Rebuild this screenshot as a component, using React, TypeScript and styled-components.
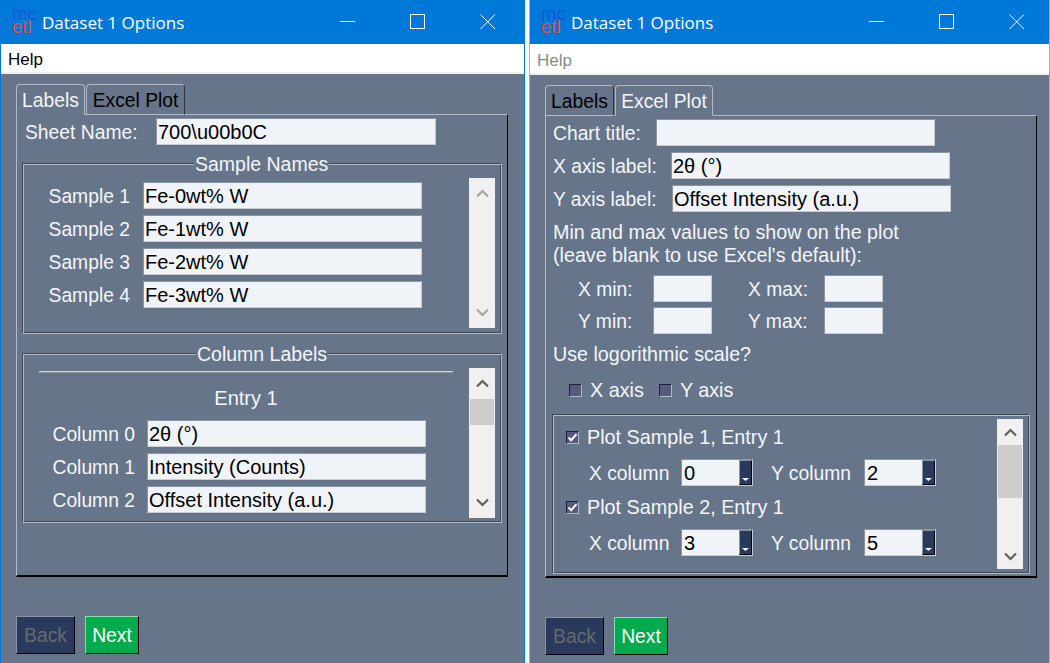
import React from 'react'
import styled, { createGlobalStyle } from 'styled-components'

const Global = createGlobalStyle`
  html, body { margin: 0; padding: 0; background: #ffffff; overflow: hidden; }
  * { box-sizing: border-box; }
`

const Desktop = styled.div`
  width: 1050px;
  height: 663px;
  display: flex;
  justify-content: space-between;
  font-family: "Liberation Sans", Arial, sans-serif;
  font-size: 19.3px;
  color: #f4f6fa;
`

const Win = styled.div<{ $w: number; $edge: string }>`
  width: ${(p) => p.$w}px;
  height: 663px;
  display: flex;
  flex-direction: column;
  background: #667589;
  border-left: 1px solid ${(p) => p.$edge};
  border-right: 1px solid ${(p) => p.$edge};
`

const TitleBar = styled.div<{ $inset: number }>`
  height: 44px;
  flex: none;
  display: flex;
  align-items: center;
  padding-right: ${(p) => p.$inset}px;
  background: #0078d7;
  color: #fff;
`

const Logo = styled.div`
  width: 41px;
  flex: none;
  padding-left: 11px;
  margin-top: -5px;
  font-size: 18.5px;
  line-height: 13px;
`

const LogoTop = styled.div`
  color: #1558d6;
`

const LogoBottom = styled.div`
  color: #dc4a50;
`

const Title = styled.div`
  flex: 1;
  font-family: "Open Sans", sans-serif;
  font-size: 17px;
`

const Caption = styled.div<{ $pull?: number }>`
  width: 70px;
  height: 44px;
  flex: none;
  display: flex;
  align-items: center;
  justify-content: center;
  transform: translateX(${(p) => p.$pull ?? 0}px);
`

const MenuBar = styled.div<{ $tall: number }>`
  height: ${(p) => p.$tall}px;
  flex: none;
  display: flex;
  align-items: center;
  padding: 4px 0 0 7px;
  background: #fff;
  border-bottom: 2px solid #f0f0f0;
`

const MenuItem = styled.span<{ $off?: boolean }>`
  font-size: 17px;
  color: ${(p) => (p.$off ? '#8a8a8a' : '#000')};
`

const Body = styled.div`
  flex: 1;
  padding: 10px 15px 0;
  display: flex;
  flex-direction: column;
`

const TabRow = styled.div`
  display: flex;
  height: 31px;
  flex: none;
  margin-bottom: -1px;
  position: relative;
  z-index: 1;
`

const Tab = styled.div<{ $active?: boolean; $w: number }>`
  width: ${(p) => p.$w}px;
  height: 31px;
  margin-right: 1px;
  text-align: center;
  line-height: 31px;
  font-size: 19.3px;
  color: ${(p) => (p.$active ? '#f4f6fa' : '#000')};
  background: #667589;
  border: 1px solid #b4bac3;
  border-right-color: ${(p) => (p.$active ? '#b4bac3' : '#2c3440')};
  border-bottom-color: ${(p) => (p.$active ? '#667589' : '#b4bac3')};
  border-radius: 4px 4px 0 0;
`

const Panel = styled.div`
  width: 492px;
  height: 463px;
  flex: none;
  padding: 3px 6px 0 6px;
  border: 1px solid #b4bac3;
  border-right-color: #000;
  border-bottom-color: #000;
  border-bottom-width: 2px;
  display: flex;
  flex-direction: column;
`

const Row = styled.div<{ $gap?: number; $top?: number }>`
  display: flex;
  align-items: center;
  height: 27px;
  flex: none;
  gap: ${(p) => p.$gap ?? 0}px;
  margin-top: ${(p) => p.$top ?? 0}px;
`

const Label = styled.span<{ $w?: number; $right?: boolean; $pad?: number }>`
  flex: none;
  width: ${(p) => (p.$w ? `${p.$w}px` : 'auto')};
  padding-top: 2px;
  text-align: ${(p) => (p.$right ? 'right' : 'left')};
  margin-left: ${(p) => p.$pad ?? 0}px;
  white-space: nowrap;
`

const Field = styled.div<{ $w: number }>`
  width: ${(p) => p.$w}px;
  height: 27px;
  flex: none;
  padding-left: 1px;
  font-size: 20px;
  line-height: 26px;
  color: #000;
  background: #f0f3f8;
  border: 1px solid #c8ccd2;
  border-top-color: #8b94a1;
  border-left-color: #8b94a1;
  white-space: nowrap;
  overflow: hidden;
`

const Frame = styled.div<{ $h: number; $top: number; $w?: number; $left?: number }>`
  position: relative;
  width: ${(p) => p.$w ?? 480}px;
  height: ${(p) => p.$h}px;
  flex: none;
  margin: ${(p) => p.$top}px 0 0 ${(p) => p.$left ?? -1}px;
  display: flex;
  border: 1px solid;
  border-color: #3f4957 #b4bac3 #b4bac3 #3f4957;
  box-shadow: inset 1px 1px 0 #b4bac3, inset -1px -1px 0 #3f4957;
`

const FrameTitle = styled.span<{ $x: number }>`
  position: absolute;
  top: -10px;
  left: ${(p) => p.$x}px;
  padding: 0 1px;
  font-size: 19.5px;
  line-height: 20px;
  background: #667589;
`

const FrameBody = styled.div<{ $pad: string }>`
  flex: 1;
  min-width: 0;
  padding: ${(p) => p.$pad};
  overflow: hidden;
`

const ScrollBar = styled.div<{ $h: number; $mr: number; $mt: number }>`
  width: 26px;
  height: ${(p) => p.$h}px;
  margin: ${(p) => p.$mt}px ${(p) => p.$mr}px 0 0;
  flex: none;
  display: flex;
  flex-direction: column;
  align-items: center;
  background: #f0f0f0;
  padding: 0 1px;
`

const ScrollEnd = styled.div<{ $h: number }>`
  height: ${(p) => p.$h}px;
  flex: none;
  display: flex;
  align-items: center;
  justify-content: center;
`

const ScrollTrack = styled.div`
  flex: 1;
  width: 100%;
`

const Thumb = styled.div<{ $h: number }>`
  height: ${(p) => p.$h}px;
  width: 100%;
  background: #cdcdcd;
`

const Rule = styled.div`
  width: 414px;
  height: 1px;
  margin: 1px 0 1px 16px;
  background: #d0d3d8;
  box-shadow: 0 1px 0 #8b94a1;
`

const EntryTitle = styled.div`
  width: 414px;
  margin: 15px 0 11px 16px;
  text-align: center;
  font-size: 20px;
  line-height: 22px;
`

const Para = styled.div<{ $top: number }>`
  margin: ${(p) => p.$top}px 0 0 1px;
  font-size: 19.7px;
  line-height: 23px;
  white-space: nowrap;
`

const Check = styled.div`
  width: 13px;
  height: 13px;
  flex: none;
  display: flex;
  align-items: center;
  justify-content: center;
  background: #58597e;
  border: 1px solid #b4bac3;
  border-top-color: #20242c;
  border-left-color: #20242c;
`

const CheckRow = styled.div<{ $top: number; $pad: number }>`
  display: flex;
  align-items: center;
  gap: 15px;
  height: 22px;
  margin: ${(p) => p.$top}px 0 0 ${(p) => p.$pad}px;
`

const CheckItem = styled.div`
  display: flex;
  align-items: center;
  gap: 8px;
`

const CheckText = styled.span`
  font-size: 19.8px;
  padding-top: 1px;
`

const Spin = styled.div`
  position: relative;
  width: 72px;
  height: 27px;
  flex: none;
  padding-left: 2px;
  font-size: 20px;
  line-height: 26px;
  color: #000;
  background: #f0f3f8;
  border: 1px solid #c8ccd2;
  border-top-color: #8b94a1;
  border-left-color: #8b94a1;
`

const SpinButton = styled.div`
  position: absolute;
  top: 0;
  right: 0;
  bottom: 0;
  width: 13px;
  display: flex;
  align-items: flex-end;
  justify-content: center;
  padding-bottom: 3px;
  background: #2a3a5c;
  border: 1px solid #000;
  border-top-color: #8b94a1;
  border-left-color: #8b94a1;
`

const Footer = styled.div`
  display: flex;
  gap: 10px;
  margin-top: 39px;
`

const Btn = styled.div<{ $kind: 'back' | 'next' }>`
  height: 38px;
  width: ${(p) => (p.$kind === 'back' ? 59 : 54)}px;
  text-align: center;
  line-height: 37px;
  font-size: 19.3px;
  color: ${(p) => (p.$kind === 'back' ? '#666a70' : '#ffffff')};
  background: ${(p) => (p.$kind === 'back' ? '#2a3a5c' : '#00ab4e')};
  border: 1px solid #000;
  border-top-color: ${(p) => (p.$kind === 'back' ? '#8b94a1' : '#7fe0a8')};
  border-left-color: ${(p) => (p.$kind === 'back' ? '#8b94a1' : '#7fe0a8')};
`

const Chevron = ({ up, color }: { up?: boolean; color: string }) => (
  <svg width="13" height="9" viewBox="0 0 13 9" style={{ transform: up ? 'none' : 'rotate(180deg)' }}>
    <path d="M1 7.5 L6.5 2 L12 7.5" fill="none" stroke={color} strokeWidth="2.2" />
  </svg>
)

const Tick = () => (
  <svg width="11" height="11" viewBox="0 0 11 11">
    <path d="M1.5 5.5 L4.2 8.2 L9.5 2.2" fill="none" stroke="#fff" strokeWidth="2" />
  </svg>
)

const SpinArrow = () => (
  <svg width="7" height="3" viewBox="0 0 7 3">
    <path d="M0 0 H7 L3.5 3 Z" fill="#fff" />
  </svg>
)

const Chrome = ({ inset, pull }: { inset: number; pull: number }) => (
  <TitleBar $inset={inset}>
    <Logo>
      <LogoTop>mc</LogoTop>
      <LogoBottom>etl</LogoBottom>
    </Logo>
    <Title>Dataset 1 Options</Title>
    <Caption $pull={pull}>
      <svg width="16" height="16" viewBox="0 0 16 16">
        <path d="M0 7.5 H15" stroke="#fff" fill="none" />
      </svg>
    </Caption>
    <Caption $pull={pull}>
      <svg width="16" height="16" viewBox="0 0 16 16">
        <rect x="0.5" y="0.5" width="14" height="14" stroke="#fff" fill="none" />
      </svg>
    </Caption>
    <Caption $pull={pull}>
      <svg width="16" height="16" viewBox="0 0 16 16">
        <path d="M0.5 0.5 L15 15 M15 0.5 L0.5 15" stroke="#fff" fill="none" />
      </svg>
    </Caption>
  </TitleBar>
)

const Scroll = ({ h, mr, mt, end, thumb, dim }: { h: number; mr: number; mt: number; end: number; thumb?: number; dim?: boolean }) => {
  const color = dim ? '#a6a6a6' : '#606060'
  return (
    <ScrollBar $h={h} $mr={mr} $mt={mt}>
      <ScrollEnd $h={end}>
        <Chevron up color={color} />
      </ScrollEnd>
      <ScrollTrack>{thumb ? <Thumb $h={thumb} /> : null}</ScrollTrack>
      <ScrollEnd $h={end}>
        <Chevron color={color} />
      </ScrollEnd>
    </ScrollBar>
  )
}

const Buttons = () => (
  <Footer>
    <Btn $kind="back">Back</Btn>
    <Btn $kind="next">Next</Btn>
  </Footer>
)

const samples = ['Fe-0wt% W', 'Fe-1wt% W', 'Fe-2wt% W', 'Fe-3wt% W']
const columns = ['2θ (°)', 'Intensity (Counts)', 'Offset Intensity (a.u.)']

const LabelsWindow = () => (
  <Win $w={525} $edge="#0078d7">
    <Chrome inset={1} pull={0} />
    <MenuBar $tall={30}>
      <MenuItem>Help</MenuItem>
    </MenuBar>
    <Body>
      <TabRow>
        <Tab $active $w={69}>Labels</Tab>
        <Tab $w={99}>Excel Plot</Tab>
      </TabRow>
      <Panel>
        <Row>
          <Label $w={131} $pad={2}>Sheet Name:</Label>
          <Field $w={280}>700\u00b0C</Field>
        </Row>
        <Frame $h={171} $top={18}>
          <FrameTitle $x={171}>Sample Names</FrameTitle>
          <FrameBody $pad="18px 0 0 0">
            {samples.map((s, i) => (
              <Row key={s} $gap={13} $top={i ? 6 : 0}>
                <Label $w={107} $right>Sample {i + 1}</Label>
                <Field $w={279}>{s}</Field>
              </Row>
            ))}
          </FrameBody>
          <Scroll h={150} mr={6} mt={14} end={31} dim />
        </Frame>
        <Frame $h={170} $top={19}>
          <FrameTitle $x={173}>Column Labels</FrameTitle>
          <FrameBody $pad="16px 0 0 0">
            <Rule />
            <EntryTitle>Entry 1</EntryTitle>
            {columns.map((c, i) => (
              <Row key={c} $gap={12} $top={i ? 6 : 0}>
                <Label $w={112} $right>Column {i}</Label>
                <Field $w={279}>{c}</Field>
              </Row>
            ))}
          </FrameBody>
          <Scroll h={150} mr={6} mt={14} end={31} thumb={26} />
        </Frame>
      </Panel>
      <Buttons />
    </Body>
  </Win>
)

const PlotEntry = ({ n, x, y, top }: { n: number; x: number; y: number; top: number }) => (
  <>
    <CheckRow $top={top} $pad={13}>
      <CheckItem>
        <Check><Tick /></Check>
        <CheckText>Plot Sample {n}, Entry 1</CheckText>
      </CheckItem>
    </CheckRow>
    <Row $top={11}>
      <Label $w={92} $pad={36}>X column</Label>
      <Spin>{x}<SpinButton><SpinArrow /></SpinButton></Spin>
      <Label $w={93} $pad={18}>Y column</Label>
      <Spin>{y}<SpinButton><SpinArrow /></SpinButton></Spin>
    </Row>
  </>
)

const PlotWindow = () => (
  <Win $w={521} $edge="#a9adb4">
    <Chrome inset={0} pull={3} />
    <MenuBar $tall={31}>
      <MenuItem $off>Help</MenuItem>
    </MenuBar>
    <Body>
      <TabRow>
        <Tab $w={69}>Labels</Tab>
        <Tab $active $w={98}>Excel Plot</Tab>
      </TabRow>
      <Panel>
        <Row>
          <Label $w={103} $pad={1}>Chart title:</Label>
          <Field $w={279}>{''}</Field>
        </Row>
        <Row $top={6}>
          <Label $w={118} $pad={1}>X axis label:</Label>
          <Field $w={279}>2θ (°)</Field>
        </Row>
        <Row $top={6}>
          <Label $w={119} $pad={1}>Y axis label:</Label>
          <Field $w={279}>Offset Intensity (a.u.)</Field>
        </Row>
        <Para $top={9}>
          Min and max values to show on the plot<br />(leave blank to use Excel's default):
        </Para>
        <Row $top={8}>
          <Label $w={75} $pad={26}>X min:</Label>
          <Field $w={59}>{''}</Field>
          <Label $w={76} $pad={36}>X max:</Label>
          <Field $w={59}>{''}</Field>
        </Row>
        <Row $top={5}>
          <Label $w={75} $pad={26}>Y min:</Label>
          <Field $w={59}>{''}</Field>
          <Label $w={76} $pad={36}>Y max:</Label>
          <Field $w={59}>{''}</Field>
        </Row>
        <Para $top={9}>Use logorithmic scale?</Para>
        <CheckRow $top={13} $pad={17}>
          <CheckItem><Check /><CheckText>X axis</CheckText></CheckItem>
          <CheckItem><Check /><CheckText>Y axis</CheckText></CheckItem>
        </CheckRow>
        <Frame $h={160} $top={13} $w={478} $left={0}>
          <FrameBody $pad="11px 0 0 0">
            <PlotEntry n={1} x={0} y={2} top={0} />
            <PlotEntry n={2} x={3} y={5} top={10} />
          </FrameBody>
          <Scroll h={150} mr={6} mt={4} end={26} thumb={53} />
        </Frame>
      </Panel>
      <Buttons />
    </Body>
  </Win>
)

export default function App() {
  return (
    <>
      <Global />
      <Desktop>
        <LabelsWindow />
        <PlotWindow />
      </Desktop>
    </>
  )
}
